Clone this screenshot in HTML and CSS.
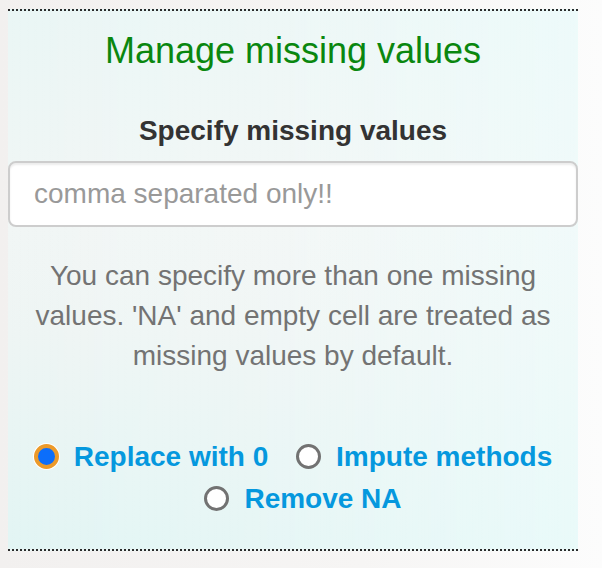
FILE: index.html
```html
<!DOCTYPE html>
<html>
<head>
<meta charset="utf-8">
<link rel="stylesheet" href="styles.css">
</head>
<body>
<div class="panel">
  <h4 class="title">Manage missing values</h4>
  <label class="field-label" for="mv">Specify missing values</label>
  <input class="text-input" id="mv" type="text" placeholder="comma separated only!!">
  <p class="help">You can specify more than one missing values. 'NA' and empty cell are treated as missing values by default.</p>
  <div class="radios">
    <label class="radio-inline"><input type="radio" name="na" checked><span>Replace with 0</span></label>
    <label class="radio-inline"><input type="radio" name="na"><span>Impute methods</span></label>
    <label class="radio-inline"><input type="radio" name="na"><span>Remove NA</span></label>
  </div>
</div>
</body>
</html>
```
FILE: styles.css
```css
html, body {
  margin: 0;
  padding: 0;
  height: 100%;
}
body {
  background: linear-gradient(to right, #f2f0ef 0%, #f6f5f4 60%, #fcfcfc 100%);
  font-family: "Liberation Sans", Arial, Helvetica, sans-serif;
  font-size: 28px;
  line-height: 40px;
  color: #333333;
}
.panel {
  margin: 9px 0 0 8px;
  width: 570px;
  border-top: 2px dotted #2b2b2b;
  border-bottom: 2px dotted #2b2b2b;
  padding-bottom: 29px;
  text-align: center;
  background:
    linear-gradient(to right, rgba(255,255,255,0.0) 0%, rgba(255,255,255,0.15) 50%, rgba(240,255,255,0.5) 100%),
    linear-gradient(to bottom, #eaf6f5 0%, #f1f6f5 40%, #eef5f4 60%, #e2f5f4 100%);
}
.title {
  margin: 0;
  padding-top: 20px;
  font-size: 36px;
  line-height: 39.6px;
  font-weight: normal;
  color: #0a870f;
}
.field-label {
  display: block;
  margin-top: 40px;
  font-weight: bold;
  color: #333333;
}
.text-input {
  display: block;
  box-sizing: border-box;
  width: 100%;
  height: 66px;
  margin: 10px 0 0 0;
  padding: 12px 24px;
  border: 2px solid #cdcdcd;
  border-radius: 8px;
  background: #ffffff;
  box-shadow: inset 0 2px 2px rgba(0,0,0,0.075);
  font-family: inherit;
  font-size: 28px;
  color: #555555;
  outline: none;
}
.text-input::placeholder {
  color: #999999;
}
.help {
  margin: 29px 0 0 0;
  color: #737373;
}
.radios {
  margin-top: 60px;
  line-height: 42px;
}
.radio-inline {
  display: inline-flex;
  align-items: center;
  gap: 15px;
  height: 42px;
  vertical-align: top;
  margin-left: 20px;
  font-weight: bold;
  color: #0598de;
}
.radio-inline:first-child {
  margin-left: 0;
}
.radio-inline input {
  appearance: none;
  -webkit-appearance: none;
  box-sizing: border-box;
  width: 25px;
  height: 25px;
  margin: 0;
  border-radius: 50%;
  border: 3px solid #727272;
  background: #ffffff;
}
.radio-inline input:checked {
  border: 4px solid #ec9a2a;
  background: #0c6efb;
  box-shadow: 0 0 0 1px #ffffff;
}
```
